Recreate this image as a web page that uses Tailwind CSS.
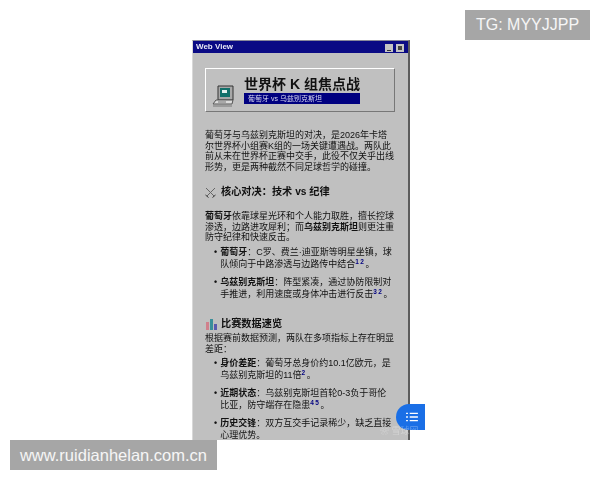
<!DOCTYPE html>
<html lang="zh-CN">

<head>
    <meta charset="UTF-8">
    <meta name="viewport" content="width=device-width, initial-scale=1.0">
    <script src="https://cdn.jsdelivr.net/npm/@tailwindcss/browser@4"></script>
    <title>Web View</title>
</head>

<body class="bg-white font-['Liberation_Sans','Noto_Sans_CJK_SC',sans-serif]">
    <div class="relative w-[600px] h-[480px] overflow-hidden pt-[40px] pl-[192px]">
        <!-- window -->
        <div class="w-[218px] h-[400px] overflow-hidden bg-[#c0c0c0] border-t border-t-[#8a8a9a] border-l border-l-[#d8d8d8] border-r-2 border-r-[#5c5c5c] blur-[0.4px]">
            <div class="h-[12px] bg-[#0a0a84] flex items-center justify-between pl-[3px] pr-[4px]">
                <span class="text-[8px] leading-[12px] font-bold text-[#e8e8f4]">Web View</span>
                <div class="flex gap-[3px] mt-[2px]">
                    <div class="w-[8px] h-[8px] bg-[#c4c4c4] flex items-end justify-center pb-[1px]">
                        <div class="w-[4px] h-[1px] bg-[#333333]"></div>
                    </div>
                    <div class="w-[8px] h-[8px] bg-[#c4c4c4] flex items-center justify-center">
                        <div class="w-[4px] h-[4px] bg-[#444444]"></div>
                    </div>
                </div>
            </div>

            <div class="pl-[12px] pr-[13px] pt-[15px] text-[9px] leading-[10.5px] text-[#111111]">
                <!-- banner -->
                <div class="h-[44px] w-[190px] flex items-center pl-[6px] gap-[9px] border border-t-white border-l-white border-r-[#777777] border-b-[#777777]">
                    <svg class="w-[23px] h-[23px] mt-[12px] shrink-0" viewBox="0 0 23 23">
                        <path d="M6 1h15v14H6z" fill="#a8a8a8" stroke="#333333" />
                        <path d="M8 3h10v9H8z" fill="#12706a" />
                        <path d="M10 5h5v3h-5z" fill="#e4f0ee" />
                        <path d="M4 15h17l-1 4H1z" fill="#dcdcdc" stroke="#555555" />
                        <path d="M1 21h19" stroke="#777777" />
                        <path d="M6 17h8" stroke="#777777" />
                    </svg>
                    <div class="w-[116px] mt-[-1px]">
                        <div class="text-[14px] leading-[18px] font-bold text-[#111111] whitespace-nowrap">世界杯 K 组焦点战</div>
                        <div class="h-[11px] bg-[#000080] pl-[4px] text-[7px] leading-[11px] text-[#d8d8f0] whitespace-nowrap">葡萄牙 vs 乌兹别克斯坦</div>
                    </div>
                </div>

                <p class="mt-[18px] whitespace-nowrap">葡萄牙与乌兹别克斯坦的对决，是2026年卡塔<br>尔世界杯小组赛K组的一场关键遭遇战。两队此<br>前从未在世界杯正赛中交手，此役不仅关乎出线<br>形势，更是两种截然不同足球哲学的碰撞。</p>

                <h2 class="mt-[13px] h-[14px] flex items-center gap-[5px] text-[10.2px] font-bold text-[#111111]">
                    <svg class="w-[11px] h-[11px] shrink-0" viewBox="0 0 11 11" fill="none" stroke="#666666" stroke-width="1">
                        <path d="M1 1l8 8M10 1L2 9" />
                        <path d="M0.5 8l3 2.5M10.5 8l-3 2.5" stroke="#333333" />
                    </svg>
                    <span>核心对决：技术 vs 纪律</span>
                </h2>

                <p class="mt-[12px] whitespace-nowrap"><b>葡萄牙</b>依靠球星光环和个人能力取胜，擅长控球<br>渗透，边路进攻犀利；而<b>乌兹别克斯坦</b>则更注重<br>防守纪律和快速反击。</p>

                <ul class="mt-[3.5px] flex flex-col gap-[5.4px] leading-[12.3px] whitespace-nowrap">
                    <li class="flex pl-[9px] gap-[3px]"><span class="font-bold">•</span><span><b>葡萄牙</b>：C罗、费兰·迪亚斯等明星坐镇，球<br>队倾向于中路渗透与边路传中结合<sup class="text-[6.5px] font-bold text-[#000080] tracking-[1.5px]">12</sup>。</span></li>
                    <li class="flex pl-[9px] gap-[3px]"><span class="font-bold">•</span><span><b>乌兹别克斯坦</b>：阵型紧凑，通过协防限制对<br>手推进，利用速度或身体冲击进行反击<sup class="text-[6.5px] font-bold text-[#000080] tracking-[1.5px]">32</sup>。</span></li>
                </ul>

                <h2 class="mt-[16.5px] h-[14px] flex items-center gap-[4px] text-[10.2px] font-bold text-[#111111]">
                    <svg class="w-[12px] h-[12px] shrink-0" viewBox="0 0 12 12">
                        <path d="M1 4h3v8H1z" fill="#d0808c" />
                        <path d="M5 1h3v11H5z" fill="#3a8f9a" />
                        <path d="M9 6h3v6H9z" fill="#5a5ab0" />
                    </svg>
                    <span>比赛数据速览</span>
                </h2>

                <p class="mt-[2px] whitespace-nowrap">根据赛前数据预测，两队在多项指标上存在明显<br>差距：</p>

                <ul class="mt-[3px] flex flex-col gap-[5.4px] leading-[12.3px] whitespace-nowrap">
                    <li class="flex pl-[9px] gap-[3px]"><span class="font-bold">•</span><span><b>身价差距</b>：葡萄牙总身价约10.1亿欧元，是<br>乌兹别克斯坦的11倍<sup class="text-[6.5px] font-bold text-[#000080] tracking-[1.5px]">2</sup>。</span></li>
                    <li class="flex pl-[9px] gap-[3px]"><span class="font-bold">•</span><span><b>近期状态</b>：乌兹别克斯坦首轮0-3负于哥伦<br>比亚，防守端存在隐患<sup class="text-[6.5px] font-bold text-[#000080] tracking-[1.5px]">45</sup>。</span></li>
                    <li class="flex pl-[9px] gap-[3px]"><span class="font-bold">•</span><span><b>历史交锋</b>：双方互交手记录稀少，缺乏直接<br>心理优势。</span></li>
                </ul>
            </div>
        </div>

        <!-- floating button -->
        <div class="absolute left-[396px] top-[404px] w-[29px] h-[26px] bg-[#1a6fe6] rounded-l-[13px] flex items-center justify-center pl-[3px]">
            <svg class="w-[12px] h-[10px]" viewBox="0 0 13 11" fill="none" stroke="#ffffff" stroke-width="1.6">
                <path d="M0 1.5h2M4 1.5h9M0 5.5h2M4 5.5h9M0 9.5h2M4 9.5h9" />
            </svg>
        </div>
        <div class="absolute left-[380px] top-[426px] text-[9px] leading-[11px] text-white/30 blur-[0.5px]">❀ 雪球网</div>

        <!-- watermarks -->
        <div class="absolute left-[465px] top-[10px] w-[125px] h-[30px] bg-[#a6a6a6] text-white/90 text-[16px] leading-[30px] text-center">TG: MYYJJPP</div>
        <div class="absolute left-[10px] top-[440px] w-[207px] h-[30px] bg-[#a6a6a6] text-white/90 text-[16.5px] leading-[30px] text-center">www.ruidianhelan.com.cn</div>
    </div>
</body>

</html>
